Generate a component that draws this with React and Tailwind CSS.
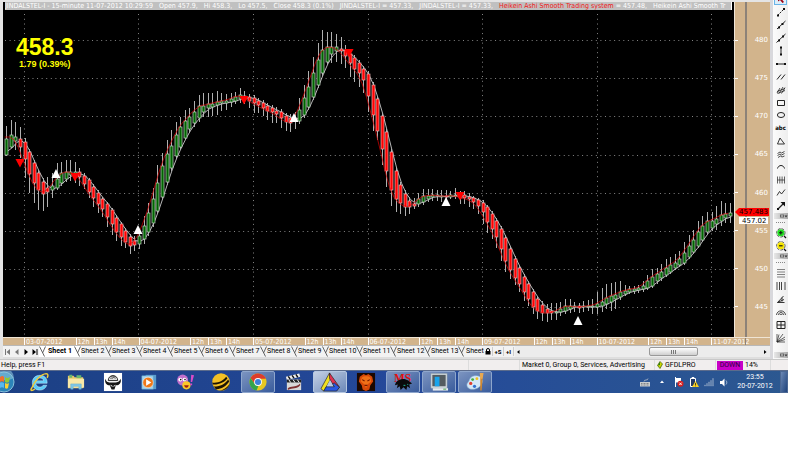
import React from "react";

const FIRST_X = 6.2;
const STEP = 4.58;

// One row per 15-minute bar: [direction, bodyTop, bodyBottom, wickHigh, wickLow]
const BARS = `
g139-155:126,156 g135-147:120,148 g137-141:122,150 r139-147:127,158 r142-159:138,178
r152-174:149,193 r163-183:160,203 r173-190:170,210 r182-194:178,211 r188-192:177,207
g186-190:173,198 g179-188:163,190 g173-183:162,186 g172-179:160,182 g172-175:160,181
g172-174:162,183 r172-177:168,186 r176-184:173,189 r180-192:178,198 r187-198:184,207
r193-204:190,213 r199-209:197,217 r204-217:202,227 r210-224:208,235 r218-232:215,241
r224-237:222,246 r231-242:228,248 r237-246:234,254 r241-245:236,251 g236-244:230,249
g226-239:216,244 g213-232:203,236 g199-223:188,227 g183-211:165,214 g166-197:153,200
g154-182:140,185 g146-168:130,171 g135-156:122,159 g127-147:117,149 g121-138:110,140
g117-129:108,133 g112-123:101,127 g106-118:95,122 g106-112:93,117 g104-108:93,117
g104-107:93,116 g102-105:91,115 g101-103:93,111 g101-103:94,110 g99-102:93,107
g97-101:92,104 g95-99:88,103 g96-98:91,104 r97-101:94,108 r98-103:95,113
r101-105:98,113 r103-108:100,116 r106-111:103,120 r108-112:105,123 r111-114:107,123
r112-118:109,128 r116-122:113,131 r118-123:114,132 r118-121:112,129 g110-121:98,124
g98-115:85,118 g87-107:71,110 g73-97:57,100 g60-85:43,88 g50-73:30,76
g47-62:32,65 g47-54:32,63 g47-51:34,62 r49-51:37,64 r50-56:45,68
r54-63:51,77 r58-69:55,82 r63-73:60,87 r69-80:66,93 r74-96:71,112
r85-115:82,131 r99-131:96,140 r116-149:113,165 r132-171:129,187 r152-190:149,206
r171-199:168,212 r185-203:182,214 r194-207:190,216 r201-207:197,214 r204-206:198,209
g199-204:193,207 g196-202:189,205 g196-199:189,202 g195-197:189,201 g195-196:190,201
g196-197:190,202 r196-197:190,199 g195-197:191,199 g195-196:188,199 r196-198:191,204
r195-198:191,204 r197-199:193,207 r198-202:196,209 r200-206:198,214 r203-212:200,224
r207-222:205,233 r214-229:211,239 r221-237:218,248 r229-249:226,261 r238-261:235,272
r249-270:246,279 r259-278:256,285 r268-284:265,292 r277-292:274,301 r284-299:281,306
r292-307:289,314 r299-311:296,319 r305-313:301,321 r309-313:304,322 r311-313:303,320
g312-313:303,320 g309-312:302,316 g306-311:299,314 g306-309:299,313 g306-307:302,312
r306-308:303,313 g306-307:301,312 g306-307:300,311 g306-307:299,314 g304-307:292,314
g302-306:288,312 g298-304:284,309 g296-302:283,311 g295-299:282,309 g292-297:281,300
g291-294:285,296 g289-292:286,294 g289-291:286,294 g288-290:285,293 g286-289:281,292
g281-288:275,290 g277-286:269,288 g274-281:268,284 g272-278:264,281 g268-275:259,277
g265-272:257,274 g263-268:254,270 g259-265:251,267 g253-263:242,265 g246-257:235,259
g240-252:230,254 g232-246:221,248 g226-240:216,242 g221-232:212,235 g221-228:212,231
g219-224:206,230 g215-221:201,226 g214-218:203,223 g213-216:203,223
`
  .trim()
  .split(/\s+/)
  .map((row, i) => {
    const [top, bottom, high, low] = row.slice(1).split(/[-:,]/).map(Number);
    return { x: FIRST_X + i * STEP, up: row[0] === "g", top, bottom, high, low };
  });

const smooth = (values) =>
  values.map((_, i) => {
    const part = values.slice(Math.max(0, i - 1), i + 2);
    return part.reduce((a, b) => a + b, 0) / part.length;
  });

const toPath = (values, shift) =>
  values.map((y, i) => `${(BARS[i].x + shift).toFixed(1)},${y.toFixed(1)}`).join(" ");

const FAST = toPath(smooth(BARS.map((b) => (b.up ? b.top : b.bottom))), -1.5);
const SLOW = toPath(smooth(BARS.map((b) => (b.up ? b.bottom : b.top))), 1.5);

const GRID_Y = [40, 78, 116, 155, 193, 231, 269, 307];
const GRID_X = [24, 138, 253, 368, 482, 597, 711];
const SELLS = [[20, 163], [75, 177], [244, 100], [349, 53], [460, 196]];
const BUYS = [[56, 174], [138, 230], [294, 118], [446, 202], [578, 321]];

function Chart() {
  return (
    <svg viewBox="3 10 731 327" preserveAspectRatio="none" className="block h-[327px] w-full bg-black" role="img" aria-label="Price chart">
      <g stroke="#858585" strokeWidth="1">
        {GRID_Y.map((y) => <line key={y} x1="5" x2="734" y1={y + 0.5} y2={y + 0.5} strokeDasharray="1 3.58" />)}
        {GRID_X.map((x) => <line key={x} x1={x + 0.5} x2={x + 0.5} y1="14" y2="337" strokeDasharray="1 3.77" />)}
      </g>
      <polyline points={SLOW} fill="none" stroke="#e4e4e4" strokeWidth="0.8" />
      <g>
        {BARS.map((b) => {
          const x = Math.round(b.x);
          return (
            <g key={b.x}>
              <path d={`M${x + 0.5} ${b.high}V${b.low}`} stroke="#b0b0b0" strokeWidth="1" />
              <rect x={x - 1} y={b.top} width="3" height={Math.max(1, b.bottom - b.top)} fill={b.up ? "#006400" : "#ff0000"} stroke={b.up ? "#c4d4c4" : "#f0b4b4"} strokeWidth="0.7" />
            </g>
          );
        })}
      </g>
      <polyline points={FAST} fill="none" stroke="#e00000" strokeWidth="0.7" />
      {SELLS.map(([x, y]) => <path key={x} d={`M${x - 4.5} ${y - 4}h9l-4.5 8.500z`} fill="#ff0000" />)}
      {BUYS.map(([x, y]) => <path key={x} d={`M${x} ${y - 5}l4.500 9h-9z`} fill="#ffffff" />)}
    </svg>
  );
}

const PRICES = [480, 475, 470, 465, 460, 455, 450, 445];

function PriceAxis() {
  return (
    <div className="relative flex w-9 shrink-0 border-l border-[#f0e6d8] bg-[#d2b48c] font-['DejaVu_Sans',sans-serif] text-[7px] leading-[10px] text-white">
      <div className="flex w-[10px] flex-col justify-between pt-[38px] pb-[30px]">
        {PRICES.map((p) => <span key={p} className="h-px w-[3px] bg-white" />)}
      </div>
      <div className="flex flex-1 flex-col justify-between border-l-2 border-[#8c8278] pt-[33px] pr-[2px] pb-[25px] text-right">
        {PRICES.map((p) => <span key={p}>{p}</span>)}
      </div>
      <div className="absolute top-[206px] right-px flex w-[34px] flex-col items-end text-black">
        <span className="h-2 w-full bg-[#ff0000] pr-px text-right leading-[9px] [clip-path:polygon(0_50%,4px_0,100%_0,100%_100%,4px_100%)]">457.483</span>
        <span className="mr-px mt-px h-[7px] w-[29px] bg-white pl-[3px] leading-[8px]">457.02</span>
      </div>
    </div>
  );
}

const DAYS = ["03-07-2012", "04-07-2012", "05-07-2012", "06-07-2012", "09-07-2012", "10-07-2012"];

function DateAxis() {
  return (
    <div className="relative flex h-2 overflow-hidden border-t border-[#efe4d4] bg-[#d2b48c] pl-[21px] font-['DejaVu_Sans_Condensed','DejaVu_Sans',sans-serif] text-[7px] leading-[9px] text-white">
      {DAYS.map((d) => (
        <div key={d} className="flex flex-1">
          <span className="flex-1 border-l border-white pl-px">{d}</span>
          <span className="w-[18px] border-l border-white pl-px">12h</span>
          <span className="w-[18px] border-l border-white pl-px">13h</span>
          <span className="w-[27px] border-l border-white pl-px">14h</span>
        </div>
      ))}
      <span className="w-[59px] border-l border-white pl-px">11-07-2012</span>
      <span className="absolute top-0 right-6 h-full w-px bg-[#8c8278]" />
    </div>
  );
}

function TabEdge({ className = "" }) {
  return (
    <svg viewBox="0 0 7 11" className={`h-[11px] w-[7px] shrink-0 ${className}`} fill="none" stroke="#555" strokeWidth="0.9">
      <path d="M0.500 0.500L5.500 10.500M6.500 0.500L3.500 7" />
    </svg>
  );
}

function NavButton({ label, d, muted }) {
  return (
    <button aria-label={label} className="flex h-[11px] w-[9px] items-center justify-center">
      <svg viewBox="0 0 8 8" className="h-2 w-2" fill={muted ? "#777" : "#000"}><path d={d} /></svg>
    </button>
  );
}

const SHORT_TABS = ["Sheet 2", "Sheet 3", "Sheet 4", "Sheet 5", "Sheet 6", "Sheet 7", "Sheet 8", "Sheet 9"];
const LONG_TABS = ["Sheet 10", "Sheet 11", "Sheet 12", "Sheet 13"];

function SheetTabs() {
  return (
    <div className="flex h-3 items-center overflow-hidden whitespace-nowrap border-t border-[#b8b8b8] bg-[#f2f2f2]">
      <NavButton label="First sheet" muted d="M1 1h1v6h-1zM6 1v6l-3.500-3z" />
      <NavButton label="Previous sheet" muted d="M5.500 1v6l-3.500-3z" />
      <NavButton label="Next sheet" d="M2.500 1v6l3.500-3z" />
      <NavButton label="Last sheet" d="M1.500 1v6l3.500-3zM5.500 1h1v6h-1z" />
      <button className="flex h-[11px] w-[42px] items-center justify-between bg-white font-bold">
        <TabEdge /><span>Sheet 1</span><TabEdge />
      </button>
      {SHORT_TABS.map((t) => (
        <button key={t} className="flex h-[11px] w-[31px] items-center justify-between">
          <span>{t}</span><TabEdge />
        </button>
      ))}
      {LONG_TABS.map((t) => (
        <button key={t} className="flex h-[11px] w-[34px] items-center justify-between">
          <span>{t}</span><TabEdge />
        </button>
      ))}
      <button className="h-[11px] w-[19px] pl-px text-left">Sheet</button>
      <button aria-label="Lock sheets" className="flex h-[9px] w-[9px] items-center justify-center border-r border-[#ccc]">
        <svg viewBox="0 0 6 7" className="h-[7px] w-[6px]"><path d="M1.500 3V2a1.500 1.500 0 013 0v1" fill="none" stroke="#000" /><path d="M.5 3h5v3.500h-5z" /></svg>
      </button>
      <button className="h-[9px] w-[11px] border-r border-[#ccc] text-[6px] leading-[9px] font-bold">+S</button>
      <button className="h-[9px] w-[10px] border-r border-[#ccc] text-[6px] leading-[9px] font-bold">+I</button>
      <div className="ml-px flex h-[11px] min-w-0 flex-1 items-center justify-between bg-[#ececec]">
        <button aria-label="Scroll left" className="h-[9px] w-[6px]"><svg viewBox="0 0 6 8" className="h-2 w-[6px]"><path d="M4.500 2v4l-2.500-2z" /></svg></button>
        <div className="flex flex-1 justify-end pr-[64px]">
          <div className="flex h-[9px] w-[49px] items-center justify-center gap-px rounded-xs border border-[#999] bg-linear-to-b from-white to-[#cfcfcf]">
            <span className="h-1 w-px bg-[#777]" /><span className="h-1 w-px bg-[#777]" /><span className="h-1 w-px bg-[#777]" />
          </div>
        </div>
        <button aria-label="Scroll right" className="h-[9px] w-2"><svg viewBox="0 0 6 8" className="h-2 w-[6px]"><path d="M2 2v4l2.500-2z" /></svg></button>
      </div>
    </div>
  );
}

const TOOLS_DRAW = [
  ["Select", <path d="M3 1l6 3-2.500 1 2.500 3-1.500 1-2.500-3-2 1.500z" fill="#a00010" stroke="none" />],
  ["Trend line", <><path d="M2.500 9.500L9 3" strokeDasharray="2 1" /><path d="M2 8.500h2v2h-2zM8 2h2v2h-2z" fill="#111" stroke="none" /></>],
  ["Ray", <><path d="M2 10L10.500 2" /><path d="M3 7.500h2v2h-2zM6.500 4h2v2h-2z" fill="#111" stroke="none" /></>],
  ["Extended line", <><path d="M1.500 10.500L10.500 2" /><path d="M3 7.500h2v2h-2zM7 3.500h2v2h-2z" fill="#111" stroke="none" /></>],
  ["Vertical line", <><path d="M6 2v8" /><path d="M5 1.500h2v2h-2zM5 8.500h2v2h-2z" fill="#111" stroke="none" /></>],
  ["Horizontal line", <><path d="M1.500 6h9" /><path d="M1 5h2v2h-2zM9 5h2v2h-2z" fill="#111" stroke="none" /></>],
  ["Parallel lines", <path d="M2 8.500L6 3.500M6 8.500L10 3.500" />],
  ["Channel", <path d="M2 9L5 4M4 9.500L8 3M6.500 9.500L10 3.500M2 7.500L10 4.500M2.500 9.500L10 6.500" strokeWidth="0.8" />],
  ["Rectangle", <path d="M2.500 3.500h7v5h-7z" />],
  ["Ellipse", <ellipse cx="6" cy="6" rx="3.600" ry="2.500" />],
  ["Text", null],
  ["Triangle", <path d="M5 3L2.500 9h7z" strokeWidth="0.9" />],
  ["Fibonacci channel", <path d="M2.500 5.500L5 4l1.500 1L9.500 3.500M2.500 7.500L5 6l1.500 1L9.500 5.500M3 9.500L5.500 8l1.500 1L9.500 8" strokeWidth="0.8" />],
  ["Arc", <path d="M2.500 7.500C3.500 3.500 8.500 3.500 9.500 7.500" />],
  ["Cycle lines", <path d="M2.500 2.500v7M4.800 2.500v7M7.100 2.500v7M9.500 2.500v7M2.500 6h7" strokeWidth="0.7" />],
  ["Zig zag", <path d="M2 8.500L4.500 4.500l2 2.500 3.500-4.500" strokeWidth="0.9" />],
  ["Arrow", <><path d="M3 9L8 4" strokeWidth="1.300" /><path d="M10 2v4.500l-4.500-4.500zM2 8h2v2h-2z" fill="#111" stroke="none" /></>],
];

const TOOLS_STUDY = [
  ["Fibonacci retracement", <path d="M2 2.500h8M2 5h8M2 7.500h8M2 10h8" stroke="#666" strokeWidth="0.8" />],
  ["Time zones", <path d="M2 2v8M4.500 2v8M6.500 2v8M10 2v8" stroke="#444" />],
  ["Fan", <path d="M2.500 9.500L8.500 3M2.500 9.500L9 6.500M2.500 9.500h7M7 4.500v4" strokeWidth="0.9" />],
  ["Fibonacci arcs", <path d="M1.500 9C2 3.500 10 3.500 10.500 9M3.500 9C4 5.500 8 5.500 8.500 9M5 9c.5-1.500 1.500-1.500 2 0" strokeWidth="0.8" />],
  ["Gann square", <path d="M2 2.500h8v7h-8zM6 2.500v7M2 6h8" />],
  ["Gann fan", <path d="M2 2v8h8M2 10L4 2.500M2 10L8 2M2 10l8-5M2 10l8-2.500" strokeWidth="0.7" />],
];

function Tool({ name, children, active }) {
  return (
    <button aria-label={name} className={active ? "flex h-[11px] w-[13px] items-center justify-center border border-[#6ab4e8] bg-[#dceefa]" : "flex h-3 w-[13px] items-center justify-center"}>
      {name === "Text" ? (
        <span className="font-['DejaVu_Sans_Condensed',sans-serif] text-[6px] leading-3 font-bold">abc</span>
      ) : (
        <svg viewBox="0 0 12 12" className="h-3 w-3 shrink-0" fill="none" stroke="#222" strokeWidth="1">{children}</svg>
      )}
    </button>
  );
}

function Overflow() {
  return (
    <button aria-label="Toolbar options" className="flex h-[6px] w-[14px] items-center justify-end bg-linear-to-r from-[#e8e8e8] to-[#a8a8a8]">
      <svg viewBox="0 0 10 6" className="h-[6px] w-[10px]"><path d="M2 1.500h4v3h-4z" fill="#666" /><path d="M3 2.500h2v1h-2z" fill="#ddd" /><path d="M6.500 2.500h3l-1.500 2z" fill="#333" /></svg>
    </button>
  );
}

function Grip() {
  return <div className="my-[3px] w-[9px] border-t border-dotted border-[#888]" />;
}

function ZoomTool({ name, color, plus }) {
  return (
    <button aria-label={name} className="flex h-[13px] w-[13px] items-center justify-center">
      <svg viewBox="0 0 12 12" className="h-3 w-3">
        <circle cx="5.800" cy="5.800" r="4.200" fill="#fff" stroke="#444" strokeWidth="0.9" strokeDasharray="3 1" />
        <circle cx="5.800" cy="5.800" r="3.500" fill={color} />
        <path d="M9 9l2 2" stroke="#111" strokeWidth="1.300" />
        <path d={plus ? "M4 5.800h3.600M5.800 4v3.600" : "M4 5.800h3.600"} stroke="#111" strokeWidth="1.100" />
      </svg>
    </button>
  );
}

function Toolbar() {
  return (
    <div className="flex w-[18px] shrink-0 flex-col items-center border-l-3 border-[#d8d8dc] bg-linear-to-r from-[#fbfbfb] to-[#eeeeee]">
      <div className="-mt-[6px] flex h-[218px] flex-col items-center justify-between">
        {TOOLS_DRAW.map(([name, icon], i) => <Tool key={name} name={name} active={i === 0}>{icon}</Tool>)}
      </div>
      <div className="mt-px"><Overflow /></div>
      <Grip />
      <ZoomTool name="Zoom in" color="#22dd22" plus />
      <ZoomTool name="Zoom out" color="#f4e400" />
      <div className="mt-px"><Overflow /></div>
      <Grip />
      <div className="flex flex-1 flex-col items-center gap-px pt-px">
        {TOOLS_STUDY.map(([name, icon]) => <Tool key={name} name={name}>{icon}</Tool>)}
      </div>
      <div className="mb-px"><Overflow /></div>
    </div>
  );
}

function StatusBar() {
  return (
    <div className="flex h-[11px] items-center overflow-hidden whitespace-nowrap border-t border-[#c8c8c8] bg-[#f1eeee] leading-[10px]">
      <span className="flex-1 pl-px">Help, press F1</span>
      <span className="h-full w-[51px] border-l border-[#dcdcdc]" />
      <span className="h-full w-[135px] border-l border-[#dcdcdc] pl-[2px]">Market 0, Group 0, Services, Advertising</span>
      <span className="flex h-full w-[61px] items-center gap-[2px] border-l border-[#dcdcdc] pl-[2px]">
        <svg viewBox="0 0 6 8" className="h-2 w-[6px]"><path d="M3 .5L5.500 3 3 7.500.5 4.500z" fill="#c8d800" stroke="#3a5a00" strokeWidth="0.700" /><path d="M3 1L.8 4.500 3 4z" fill="#2a7a10" /></svg>
        GFDLPRO
      </span>
      <span className="flex h-full w-[55px] items-center gap-[2px] border-l border-[#dcdcdc] pl-px">
        <span className="h-[9px] w-[26px] bg-[#c800c8] text-center leading-[9px] text-[#300040]">DOWN</span>14%
      </span>
      <span className="h-full w-[18px] border-l border-[#dcdcdc]" />
    </div>
  );
}

const APPS = [
  ["Internet Explorer", "", <><path d="M18 11.800H6c.3 2.500 2 4 4.300 4 1.700 0 2.900-.6 3.600-1.900h3.700c-1.100 3.300-3.900 5.100-7.300 5.100C5.600 19 2.500 16 2.500 11.200S5.800 3.500 10.500 3.500s7.700 3 7.500 8.300zM6.200 9.300h8.100c-.3-2.100-1.800-3.100-4-3.100s-3.700 1-4.100 3.100z" fill="#5cccf8" stroke="#d8f4ff" strokeWidth="0.500" /><path d="M2 16.500C-.5 20 2 20 5 18M2 16.500C5 9 12 2 17 1.700c2.500 0 2 2.500 1 4.500" fill="none" stroke="#f2cc38" strokeWidth="1.500" /></>],
  ["Explorer", "", <><path d="M2 4h6l1 1.500h9V17H2z" fill="#e8c868" /><path d="M3.500 3h3v3h-3zM11 3.500h5v3h-5z" fill="#68b870" /><path d="M2 7h17v9.500H2z" fill="#f8e8a8" /><path d="M5 18v-5.500h11V18h-2.500v-3h-6v3z" fill="#80c8e8" stroke="#5aa8cc" strokeWidth="0.500" /></>],
  ["Bull", "", <><path d="M1 1h19v19H1z" fill="#fff" /><path d="M2.500 7c1 4 4 4 5.500 4h5c2 0 4.500-1 5.500-4 1 4-1 7-5 7l-1.500 4.500h-3L7 14c-4 0-5.500-4-4.500-7z" fill="#161616" /><path d="M5.500 9c0-7 10-7 10 0z" fill="#ddd" stroke="#222" /><path d="M7.500 7c1-2 2 1 3-1s2 2 3 0M8.500 4.500c1 1 3 1 4 0" fill="none" stroke="#222" strokeWidth="0.700" /><path d="M8 14l2 1M13 14l-2 1" stroke="#fff" /></>],
  ["Media Player", "", <><path d="M7 3h11v15H7z" fill="#5a9ccc" /><path d="M3 4h12v14H3z" fill="#a8d4ec" stroke="#5ca4cc" strokeWidth="0.600" /><circle cx="9.500" cy="11" r="5.500" fill="#f07818" stroke="#fff" strokeWidth="0.500" /><path d="M7.500 7.500v7l5.500-3.500z" fill="#fff" /></>],
  ["Messenger", "", <><circle cx="8" cy="8.500" r="5.800" fill="#c070cc" /><circle cx="5.500" cy="8" r="2" fill="#fff" /><circle cx="10" cy="8" r="2" fill="#fff" /><circle cx="6" cy="8" r=".8" /><circle cx="10.500" cy="8" r=".8" /><circle cx="12" cy="14" r="4.300" fill="#fcc828" /><path d="M9.500 14c1 3.500 4 3.500 5 0z" fill="#a02010" /><path d="M17 3l3 .5-2 7h-1.500zM16 12h2v2h-2z" fill="#d84cc8" /></>],
  ["Striped ball", "", <><circle cx="10.500" cy="10.500" r="9.200" fill="#f4c024" /><path d="M1.300 11c6 1 12-2 14.500-6l1.500 1.500C14 11 8 13.500 2 13zM3 15c6 1 11.500-2 15-7l1.200 2C16 15 10 18.500 5 18zM8.500 19.300c4.500 0 8.500-3 11-7-1 5-6 8-11 7z" fill="#1c1404" /></>],
  ["Chrome", "open", <><circle cx="10.500" cy="10.500" r="9" fill="#e8c820" /><path d="M2.600 6.300A9 9 0 0118.800 7h-8.300L7 12z" fill="#dc3c2c" /><path d="M2.600 6.300l4.900 6.700 3.500 1.500-2 4.900A9 9 0 012.600 6.300z" fill="#34a44c" /><circle cx="10.500" cy="10.500" r="4.100" fill="#fff" /><circle cx="10.500" cy="10.500" r="3.200" fill="#3c80d8" /></>],
  ["Media Classic", "", <><path d="M2 5l14-3.500 1 3.500-14 3.500z" fill="#eee" /><path d="M4.500 4.500l2 3M8.500 3.500l2 3M12.500 2.500l2 3" stroke="#111" strokeWidth="1.500" /><path d="M3 8h15v11H3z" fill="#d8d8d8" /><path d="M3 8h15v3H3z" fill="#222" /><path d="M5 8l2 3M9.500 8l2 3M14 8l2 3" stroke="#fff" /><path d="M4 17c3-3 8 0 13-5v2c-4 5-8 2-13 5z" fill="#803030" /></>],
  ["AmiBroker", "active", <><path d="M10 1L1 17.500 4 20 11.500 7z" fill="#f0e020" stroke="#222" strokeWidth="0.700" /><path d="M10 1l10.500 15-3 3.500L10 7z" fill="#e03050" stroke="#222" strokeWidth="0.700" /><path d="M4 20l2.500-4.500H15l-2-3 2-1 5.500 4.500-3 4z" fill="#2858e0" stroke="#222" strokeWidth="0.700" /><path d="M10.500 8.500L7 15h7z" fill="#b8c8e0" /></>],
  ["Fire mask", "", <><path d="M1 1h19v19H1z" fill="#1c0800" /><path d="M4 5l4-3 2.500 1.500L13 2l4 3 1 5-3 4-1 4.500-3.500 1.500L7 18.500 6 14l-3-4z" fill="#d84808" /><path d="M6 6c2-2 7-2 9 0l1 4-4 3-1.500 4L9 13l-4-3z" fill="#f07018" /><path d="M6.500 8l2.500 1.500M14.500 8L12 9.500M9 14h3" stroke="#701800" strokeWidth="1.200" /></>],
  ["MetaStock", "open", null],
  ["Terminal", "open", <><path d="M2 1.500h17V17H2z" fill="#d4dce0" stroke="#8898a0" strokeWidth="0.500" /><path d="M3.500 3h14v12h-14z" fill="#545c60" /><path d="M6 5h5v10H6z" fill="#18a4ec" /><path d="M4 17h16v2.500H4z" fill="#e8ecee" /><path d="M15 17.500h3v1h-3z" fill="#48a848" /></>],
  ["Paint", "open", <><path d="M10 4c6-1 9 3 8 7-1 5-7 8-12 7-4-1-5-5-3-7 2-1 1-6 7-7z" fill="#d4e8f8" stroke="#88b0d0" strokeWidth="0.600" /><circle cx="6" cy="12" r="1.700" fill="#e04030" /><circle cx="8" cy="8" r="1.500" fill="#48b040" /><circle cx="12.500" cy="7" r="1.500" fill="#f0c020" /><circle cx="10" cy="15" r="1.700" fill="#3070d0" /><path d="M16 6h2.500l-1 13.500h-1.500z" fill="#d08830" /><path d="M15.500 1h4l-1 6h-2.500z" fill="#e8a850" /></>],
];

const APP_STATE = {
  "": "flex h-[22px] w-[34px] items-center justify-center",
  open: "flex h-[22px] w-[34px] items-center justify-center rounded-xs border border-[#8ea6cc] bg-linear-to-br from-[#7c94c0] to-[#3a5c9c]",
  active: "flex h-[22px] w-[34px] items-center justify-center rounded-xs border border-[#b4c6e0] bg-linear-to-br from-[#c4d0e4] to-[#6c88b8]",
};

function Taskbar() {
  return (
    <div className="flex h-[23px] items-center border-t border-[#5c6c8c] bg-linear-to-r from-[#1c4084] via-[#24489a] to-[#2c5890] font-['Roboto',sans-serif] text-white">
      <button aria-label="Start" className="h-[22px] w-[23px] overflow-hidden">
        <svg viewBox="0 0 23 22" className="h-[22px] w-[23px]">
          <circle cx="4" cy="11" r="10" fill="#2c84b8" stroke="#88c0dc" />
          <path d="M-6 7a10 10 0 0120 0c-6 3-14 3-20 0z" fill="#8cc4dc" opacity="0.600" />
          <path d="M0 6c2-1.500 3-1.500 4 0v5c-1-1-3-1-4 0z" fill="#f07030" /><path d="M5 6c2 1.500 3 1 5 0l-1 5c-1.500 1-3 1-4 0z" fill="#90c838" />
          <path d="M-1 12c2-1 4-1 5 0v5c-1-1-3-1-4 0z" fill="#58b8f0" /><path d="M5 12c1.500 1 3 1 4 0l-1 5c-1 1-2 1-3 0z" fill="#fcd030" />
        </svg>
      </button>
      <div className="flex w-[469px] justify-between">
        {APPS.map(([name, state, icon]) => (
          <button key={name} aria-label={name} className={APP_STATE[state]}>
            {icon ? (
              <svg viewBox="0 0 21 21" className="h-5 w-5 shrink-0">{icon}</svg>
            ) : (
              <svg viewBox="0 0 21 21" className="h-5 w-5 shrink-0">
                <text x="10" y="10" textAnchor="middle" fontSize="12" fontWeight="bold" fill="#e01010" className="font-['Liberation_Serif',serif]">MS</text>
                <path d="M3 11c3-4 9-5 13-2l4 3-3 1 1 4-3-2-1 4-3-3-3 3-1-4-3 2 1-4-3 1z" fill="#0a0a0a" />
                <path d="M11 14h2M15 13h1" stroke="#20c0a0" />
              </svg>
            )}
          </button>
        ))}
      </div>
      <div className="flex flex-1 items-center justify-end gap-[5px]">
        <button aria-label="Input language"><svg viewBox="0 0 10 9" className="h-[9px] w-[10px]"><path d="M0 4h10v4.500H0z" fill="#c8ccd0" /><path d="M4 3.500C4 1 8 3 8 .5" fill="none" stroke="#c8ccd0" strokeWidth="0.700" /><path d="M1 5.500h8M1 7h8" stroke="#555" strokeWidth="0.600" strokeDasharray="1 .5" /></svg></button>
        <button aria-label="Show hidden icons" className="px-1"><svg viewBox="0 0 6 4" className="h-1 w-[6px]"><path d="M3 .5l2 2.500H1z" fill="#fff" /></svg></button>
        <button aria-label="Action center"><svg viewBox="0 0 10 10" className="h-[10px] w-[10px]"><path d="M1.500 0v10" stroke="#fff" /><path d="M2 1h5v4.500H2z" fill="#fff" /><circle cx="6.500" cy="6.800" r="3" fill="#d82020" /><path d="M5.300 5.600l2.400 2.400M7.700 5.600L5.300 8" stroke="#fff" strokeWidth="0.900" /></svg></button>
        <button aria-label="Battery"><svg viewBox="0 0 10 10" className="h-[10px] w-[10px]"><path d="M1.500 1.500h5v8h-5zM3 .5h2v1H3z" fill="#223a68" stroke="#fff" /><path d="M6.500 4l3.500 6H3z" fill="#f8d020" /><path d="M6.500 6v2M6.500 8.500v.8" stroke="#222" strokeWidth="0.800" /></svg></button>
        <button aria-label="Network"><svg viewBox="0 0 10 9" className="h-[9px] w-[10px]"><path d="M.5 8V7h1v1zM2.500 8V5.500h1V8zM4.500 8V4h1v4zM6.500 8V2.500h1V8zM8.500 8V.5h1V8z" fill="#4c6c98" stroke="#a4b8d4" strokeWidth="0.400" /></svg></button>
        <button aria-label="Volume"><svg viewBox="0 0 9 9" className="h-[9px] w-[9px]"><path d="M1 3h2l2.500-2.500v8L3 6H1z" fill="#fff" /><path d="M7 2.500c1 1 1 3 0 4" fill="none" stroke="#c8d8ec" strokeWidth="0.800" /></svg></button>
      </div>
      <button className="ml-[9px] flex w-[36px] flex-col items-center text-[7px] leading-[9px]"><span>23:55</span><span>20-07-2012</span></button>
      <button aria-label="Show desktop" className="ml-[7px] h-[22px] w-[8px] border border-[#4c6894] bg-linear-to-br from-[#6c88b4] to-[#20447c]" />
    </div>
  );
}

const READOUT = [
  "JINDALSTEL-I - 15-minute 11-07-2012 10:29:59",
  "Open 457.9,",
  "Hi 458.3,",
  "Lo 457.5,",
  "Close 458.3 (0.1%)",
  "JINDALSTEL-I = 457.33,",
  "JINDALSTEL-I = 457.33,",
];

export default function App() {
  return (
    <div className="min-h-screen bg-white pr-3 font-['Roboto',sans-serif] text-[7px] leading-[9px] text-black">
      <main className="flex">
        <div className="flex min-w-0 flex-1 flex-col border-t-2 border-l-3 border-[#e4e4e4]">
          <div className="flex">
            <div className="min-w-0 flex-1 bg-black">
              <h1 className="mr-[2px] ml-[2px] flex h-2 gap-[6px] overflow-hidden whitespace-nowrap border-r border-white bg-[#c0c0c0] font-['DejaVu_Sans_Condensed','DejaVu_Sans',sans-serif] text-[7px] leading-2 font-normal text-white">
                {READOUT.map((part, i) => <span key={i}>{part}</span>)}
                <span><span className="text-[#f01818]">Heikein Ashi Smooth Trading system</span> = 457.48,</span>
                <span>Heikein Ashi Smooth Tr</span>
              </h1>
              <div className="relative">
                <Chart />
                <div className="absolute top-[26px] left-[13px] flex flex-col items-center font-['Liberation_Sans',sans-serif] font-bold text-[#ffff00]">
                  <span className="text-[23px] leading-[23px]">458.3</span>
                  <span className="text-[9px] leading-[10px]">1.79 (0.39%)</span>
                </div>
              </div>
            </div>
            <PriceAxis />
          </div>
          <DateAxis />
          <SheetTabs />
          <div className="h-[2px] bg-[#dedede]" />
        </div>
        <Toolbar />
      </main>
      <StatusBar />
      <Taskbar />
    </div>
  );
}
